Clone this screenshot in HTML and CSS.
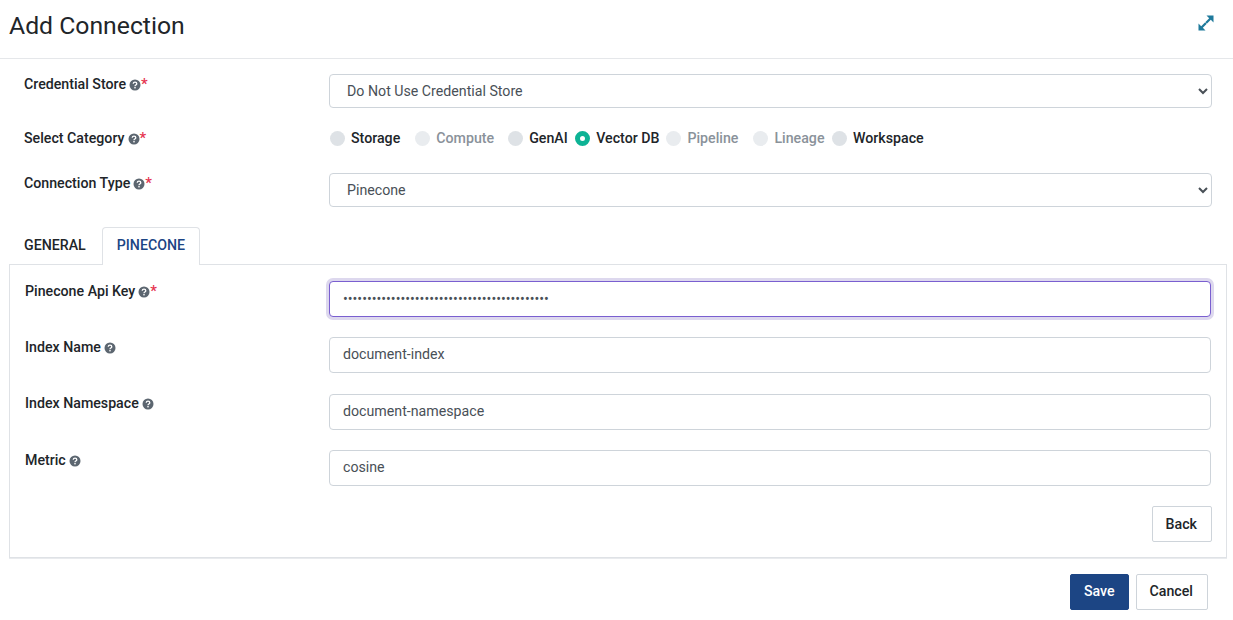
FILE: index.html
```html
<!DOCTYPE html>
<html lang="en">
<head>
    <meta charset="UTF-8">
    <title>Add Connection</title>
    <link rel="stylesheet" href="styles.css">
</head>
<body>
    <svg class="icon-defs" width="0" height="0">
        <symbol id="help" viewBox="0 0 12 12">
            <circle cx="6" cy="6" r="5.500" fill="#5c6670"/>
            <path d="M4.200 4.700C4.300 3.700 5 3.200 6 3.200s1.800.6 1.800 1.500c0 1.300-1.800 1.300-1.800 2.500" fill="none" stroke="#fff" stroke-width="1.300"/>
            <rect x="5.300" y="8" width="1.400" height="1.400" fill="#fff"/>
        </symbol>
    </svg>

    <header class="modal-header">
        <h1>Add Connection</h1>
        <svg class="expand" viewBox="0 0 16 16" width="16" height="16">
            <path d="M8.500 0.500H15.500V7.500L12.800 4.800L4.800 12.800L7.500 15.500H0.500V8.500L3.200 11.200L11.200 3.200Z" fill="#1f7a9c"/>
            <path d="M7 7L9 9" stroke="#8fbccd" stroke-width="1"/>
        </svg>
    </header>

    <main class="modal-body">
        <div class="field field-top">
            <label>Credential Store <svg class="help"><use href="#help"/></svg><span class="req">*</span></label>
            <select class="control">
                <option>Do Not Use Credential Store</option>
            </select>
        </div>
        <div class="field field-radio">
            <label>Select Category <svg class="help"><use href="#help"/></svg><span class="req">*</span></label>
            <div class="radios">
                <span class="radio storage"><i></i>Storage</span>
                <span class="radio compute off"><i></i>Compute</span>
                <span class="radio genai"><i></i>GenAI</span>
                <span class="radio vector on"><i></i>Vector DB</span>
                <span class="radio pipeline off"><i></i>Pipeline</span>
                <span class="radio lineage off"><i></i>Lineage</span>
                <span class="radio"><i></i>Workspace</span>
            </div>
        </div>
        <div class="field field-top">
            <label>Connection Type <svg class="help"><use href="#help"/></svg><span class="req">*</span></label>
            <select class="control">
                <option>Pinecone</option>
            </select>
        </div>

        <div class="tabs">
            <a class="tab">GENERAL</a>
            <a class="tab active">PINECONE</a>
        </div>
        <section class="panel">
            <div class="row">
                <label>Pinecone Api Key <svg class="help"><use href="#help"/></svg><span class="req">*</span></label>
                <input class="text focus" type="password" value="1111111111111111111111111111111111111111111">
            </div>
            <div class="row row-tall">
                <label>Index Name <svg class="help"><use href="#help"/></svg></label>
                <input class="text" type="text" value="document-index">
            </div>
            <div class="row row-raised">
                <label>Index Namespace <svg class="help"><use href="#help"/></svg></label>
                <input class="text" type="text" value="document-namespace">
            </div>
            <div class="row">
                <label>Metric <svg class="help"><use href="#help"/></svg></label>
                <input class="text" type="text" value="cosine">
            </div>
            <div class="panel-actions">
                <button class="btn back">Back</button>
            </div>
        </section>
    </main>

    <footer class="modal-footer">
        <button class="btn primary">Save</button>
        <button class="btn cancel">Cancel</button>
    </footer>
</body>
</html>
```

FILE: styles.css
```css
html, body {
    height: 620px;
    overflow: hidden;
}
body {
    margin: 0;
    background: #fff;
    color: #212529;
    font-family: Roboto, "Liberation Sans", sans-serif;
    font-size: 14.200px;
}
.icon-defs {
    display: none;
}
.modal-header {
    display: flex;
    align-items: center;
    justify-content: space-between;
    padding: 0 19px 6px 9px;
    box-sizing: border-box;
    border-bottom: 1px solid #e5e7ea;
    height: 59px;
}
.modal-header h1 {
    margin: 0;
    font-size: 24.750px;
    font-weight: 400;
    line-height: 50px;
}
.expand {
    margin-top: -7px;
}
.modal-body {
    padding: 15px 21px 0 9px;
}
label {
    font-weight: 500;
    font-size: 14.200px;
    line-height: 20px;
    color: #212529;
}
.help {
    width: 12px;
    height: 12px;
    vertical-align: -2px;
    margin-left: -0.500px;
}
.req {
    color: #e5344f;
    font-size: 15px;
}
.field {
    display: grid;
    grid-template-columns: 305px 883px;
    padding-left: 15px;
}
.field-top {
    height: 34px;
}
.field-radio {
    margin: 20px 0 25px;
    height: 20px;
    align-items: center;
}
.control {
    height: 34px;
    width: 883px;
    padding: 0 10px 0 13px;
    border: 1px solid #ced4da;
    border-radius: 4px;
    background-color: #fff;
    color: #495057;
    font-family: inherit;
    font-size: 14.200px;
}
.radios {
    display: flex;
    align-items: center;
    padding-left: 1px;
}
.radio {
    display: flex;
    align-items: center;
    font-weight: 500;
}
.radio.storage {
    margin-right: 15px;
}
.radio.compute {
    margin-right: 14px;
}
.radio.genai {
    margin-right: 7.500px;
}
.radio.vector {
    margin-right: 7px;
}
.radio.pipeline {
    margin-right: 15px;
}
.radio.lineage {
    margin-right: 7.500px;
}
.radio i {
    width: 15px;
    height: 15px;
    border-radius: 50%;
    background: #dee2e6;
    margin-right: 6px;
    box-sizing: border-box;
}
.radio.off {
    color: #8a929a;
}
.radio.off i {
    background: #e9ecef;
}
.radio.on i {
    background: #fff;
    border: 5px solid #0db395;
}
.tabs {
    display: flex;
    margin-top: 20px;
    height: 37px;
    position: relative;
}
.tab {
    padding: 0 15px 0 14px;
    line-height: 35px;
    font-weight: 500;
    color: #212529;
    border: 1px solid transparent;
    border-bottom: 0;
    border-radius: 4px 4px 0 0;
    box-sizing: border-box;
    height: 38px;
}
.tab.active {
    color: #1c4584;
    background: #fff;
    border-color: #dfe2e6;
    padding: 0 14px;
    position: relative;
    z-index: 1;
}
.panel {
    box-sizing: border-box;
    width: 1218px;
    height: 294px;
    border: 1px solid #dfe2e6;
    box-shadow: 0 1px 0 #e9ebee;
    padding: 16px 15px 0;
}
.row {
    display: grid;
    grid-template-columns: 304px 882px;
    height: 36px;
    margin-bottom: 20px;
}
.row-tall {
    margin-bottom: 21px;
}
.row-raised label {
    margin-top: -1px;
}
.text {
    box-sizing: border-box;
    width: 882px;
    height: 36px;
    padding: 0 13px 2px;
    border: 1px solid #ced4da;
    border-radius: 4px;
    color: #495057;
    font-family: inherit;
    font-size: 14.200px;
    outline: none;
}
.text.focus {
    border-color: #7a5fd0;
    box-shadow: 0 0 0 3px #ddd8ee;
    padding-bottom: 0;
}
.panel-actions {
    display: flex;
    justify-content: flex-end;
    margin-right: -1px;
}
.btn {
    box-sizing: border-box;
    height: 36px;
    padding: 0 13px;
    border: 1px solid #ced4da;
    border-radius: 2px;
    background: #fff;
    color: #212529;
    font-family: inherit;
    font-size: 14.200px;
    font-weight: 500;
}
.btn.back {
    padding-right: 14px;
}
.modal-footer .btn {
    padding-bottom: 2px;
}
.modal-footer .btn.cancel {
    padding-right: 14px;
}
.btn.primary {
    background: #1c4584;
    border-color: #1c4584;
    color: #fff;
}
.modal-footer {
    display: flex;
    justify-content: flex-end;
    gap: 7px;
    margin-top: 16px;
    padding-right: 25px;
}
```
